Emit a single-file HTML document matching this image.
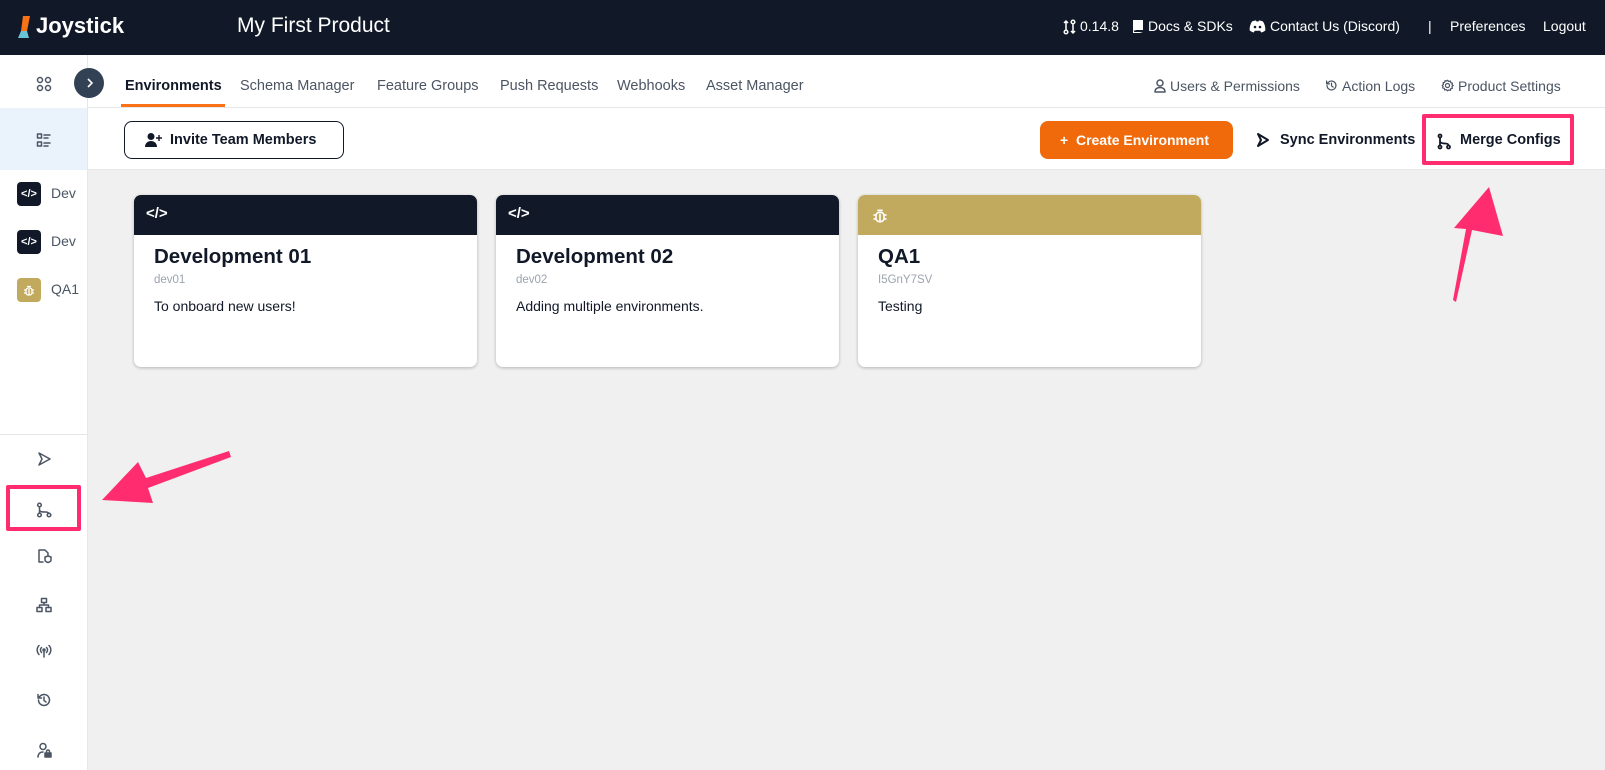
<!DOCTYPE html>
<html><head><meta charset="utf-8"><style>
*{box-sizing:border-box;margin:0;padding:0}
body{width:1605px;height:770px;overflow:hidden;background:#f0f0f0;font-family:"Liberation Sans",sans-serif;position:relative;color:#111827}
.a{position:absolute;white-space:nowrap}
.hdr{left:0;top:0;width:1605px;height:55px;background:#111827;color:#fff}
.tabs{left:88px;top:55px;width:1517px;height:53px;background:#fff;border-bottom:1px solid #e5e7eb}
.bar{left:88px;top:108px;width:1517px;height:62px;background:#fff;border-bottom:1px solid #e5e7eb}
.side{left:0;top:55px;width:88px;height:715px;background:#fff;border-right:1px solid #e5e7eb}
.tab{top:78px;font-size:14.5px;color:#4b5563}
.card{width:343px;height:172px;background:#fff;border-radius:7px;box-shadow:0 1px 3px rgba(0,0,0,.25);overflow:hidden;top:195px}
.card .h{height:40px;background:#111827;position:relative}
.card .t{position:absolute;left:20px;top:50px;font-size:20.5px;font-weight:bold;color:#111827}
.card .s{position:absolute;left:20px;top:79px;font-size:11.5px;color:#9ca3af}
.card .d{position:absolute;left:20px;top:103px;font-size:14px;color:#111827}
svg{display:block}
.ic{stroke:#4b5563;fill:none;stroke-width:1.5;stroke-linecap:round;stroke-linejoin:round}
.hx{top:18px;font-size:14px}
</style></head><body>
<div class="a hdr">
  <svg class="a" style="left:18px;top:15px" width="14" height="24" viewBox="0 0 14 24"><path d="M5 1h7l-3 15H3z" fill="#f97316"/><path d="M3 16h6l2 7H0z" fill="#67c5d6"/></svg>
  <div class="a" style="left:36px;top:13px;font-size:22px;font-weight:bold">Joystick</div>
  <div class="a" style="left:237px;top:14px;font-size:21px">My First Product</div>
  <svg class="a" style="left:1063px;top:19px" width="13" height="16" viewBox="0 0 13 16"><g fill="none" stroke="#fff" stroke-width="1.5"><circle cx="3" cy="13" r="1.8"/><circle cx="10" cy="3" r="1.8"/><path d="M3 11V2M1 4l2-2 2 2M10 5v9M8 12l2 2 2-2"/></g></svg>
  <div class="a hx" style="left:1080px">0.14.8</div>
  <svg class="a" style="left:1132px;top:19px" width="12" height="15" viewBox="0 0 12 15"><path d="M1 1h10v10H1zM1 11v3h10" fill="#fff"/><path d="M2 12.5h9" stroke="#111827"/></svg>
  <div class="a hx" style="left:1148px">Docs &amp; SDKs</div>
  <svg class="a" style="left:1249px;top:20px" width="17" height="13" viewBox="0 0 17 13"><path d="M3 1.5C5 .7 6 .5 7 .5l.5 1h2l.5-1c1 0 2 .2 4 1 1.5 2.5 2.5 5 2.3 9-1.5 1.2-3 1.8-4 2l-1-1.5-.1-.3H5.8l-.1.3-1 1.5c-1-.2-2.5-.8-4-2C.5 6.5 1.5 4 3 1.5z" fill="#fff"/><circle cx="6" cy="7" r="1.3" fill="#111827"/><circle cx="11" cy="7" r="1.3" fill="#111827"/></svg>
  <div class="a hx" style="left:1270px">Contact Us (Discord)</div>
  <div class="a hx" style="left:1428px">|</div>
  <div class="a hx" style="left:1450px">Preferences</div>
  <div class="a hx" style="left:1543px">Logout</div>
</div>
<div class="a side"></div>
<div class="a tabs"></div>
<div class="a bar"></div>
<svg class="a" style="left:36px;top:76px" width="16" height="16" viewBox="0 0 16 16"><g class="ic" stroke-width="1.3"><circle cx="4" cy="4" r="2.5"/><circle cx="12" cy="4" r="2.5"/><circle cx="4" cy="12" r="2.5"/><circle cx="12" cy="12" r="2.5"/></g></svg>
<div class="a" style="left:74px;top:68px;width:30px;height:30px;border-radius:50%;background:#334155"></div>
<svg class="a" style="left:84px;top:77px" width="12" height="12" viewBox="0 0 12 12"><path d="M4 2l4 4-4 4" stroke="#fff" stroke-width="1.6" fill="none"/></svg>
<div class="a" style="left:0;top:108px;width:87px;height:62px;background:#eaf2fc"></div>
<svg class="a" style="left:36px;top:132px" width="16" height="16" viewBox="0 0 16 16"><g class="ic" stroke-width="1.3"><rect x="1.5" y="2" width="4" height="4"/><rect x="1.5" y="10" width="4" height="4"/><path d="M8 3h6M8 6h4M8 11h6M8 14h4"/></g></svg>
<div class="a" style="left:17px;top:182px;width:24px;height:24px;border-radius:4px;background:#111827;color:#fff;font-size:11px;text-align:center;line-height:24px;font-weight:bold">&lt;/&gt;</div>
<div class="a" style="left:51px;top:185px;font-size:14px;color:#4b5563">Dev</div>
<div class="a" style="left:17px;top:230px;width:24px;height:24px;border-radius:4px;background:#111827;color:#fff;font-size:11px;text-align:center;line-height:24px;font-weight:bold">&lt;/&gt;</div>
<div class="a" style="left:51px;top:233px;font-size:14px;color:#4b5563">Dev</div>
<div class="a" style="left:17px;top:278px;width:24px;height:24px;border-radius:4px;background:#c1a95e"></div>
<svg class="a" style="left:23px;top:284px" width="12" height="12" viewBox="0 0 12 12"><g stroke="#fff" fill="none" stroke-width="1.3"><rect x="3" y="4" width="6" height="7" rx="2.5"/><path d="M4 2.5h4M1 6h2M9 6h2M1 9h2M9 9h2M6 5v6"/></g></svg>
<div class="a" style="left:51px;top:281px;font-size:14px;color:#4b5563">QA1</div>
<div class="a" style="left:0;top:434px;width:87px;border-top:1px solid #e5e7eb"></div>
<svg class="a" style="left:36px;top:451px" width="16" height="16" viewBox="0 0 16 16"><path class="ic" d="M3 2l11 6-11 6 3-6z"/></svg>
<div class="a" style="left:6px;top:485px;width:75px;height:46px;border:4px solid #ff2d6f;border-radius:2px"></div>
<svg class="a" style="left:36px;top:502px" width="16" height="16" viewBox="0 0 16 16"><g class="ic" stroke-width="1.3"><circle cx="3.5" cy="3" r="1.8"/><circle cx="3.5" cy="13" r="1.8"/><circle cx="13" cy="13" r="1.8"/><path d="M3.5 5v6M3.5 8c0 2 3 2 6 2 2 0 3.5 1 3.5 1.5"/></g></svg>
<svg class="a" style="left:36px;top:548px" width="16" height="16" viewBox="0 0 16 16"><g class="ic" stroke-width="1.3"><path d="M7 14H3V2h6l3 3v2"/><path d="M9 9l3-1 3 1v3c0 1.5-3 2.5-3 2.5s-3-1-3-2.5z"/></g></svg>
<svg class="a" style="left:36px;top:597px" width="16" height="16" viewBox="0 0 16 16"><g class="ic" stroke-width="1.3"><rect x="5.5" y="1.5" width="5" height="4"/><rect x="1" y="10.5" width="5" height="4"/><rect x="10" y="10.5" width="5" height="4"/><path d="M8 5.5v2.5M3.5 10.5V8h9v2.5"/></g></svg>
<svg class="a" style="left:36px;top:643px" width="16" height="16" viewBox="0 0 16 16"><g class="ic" stroke-width="1.3"><circle cx="8" cy="7" r="1"/><path d="M8 8v6M5.5 4.5a3.5 3.5 0 0 0 0 5M10.5 4.5a3.5 3.5 0 0 1 0 5M3 2.5a6.5 6.5 0 0 0 0 9M13 2.5a6.5 6.5 0 0 1 0 9"/></g></svg>
<svg class="a" style="left:36px;top:692px" width="16" height="16" viewBox="0 0 16 16"><g class="ic" stroke-width="1.5"><path d="M2.5 8a5.5 5.5 0 1 0 1.6-3.9L2 6M2 2.5V6h3.5M8 5v3.5l2 1.5"/></g></svg>
<svg class="a" style="left:36px;top:742px" width="16" height="16" viewBox="0 0 16 16"><g class="ic" stroke-width="1.3"><circle cx="7" cy="4.5" r="3"/><path d="M2 15c0-3 2-5 5-5"/><rect x="9" y="11" width="6" height="4" fill="#4b5563"/><path d="M10.5 11V9.5a1.5 1.5 0 0 1 3 0V11"/></g></svg>
<div class="a tab" style="left:125px;color:#111827;font-weight:bold">Environments</div>
<div class="a" style="left:121px;top:104px;width:104px;height:3px;background:#f97316"></div>
<div class="a tab" style="left:240px">Schema Manager</div>
<div class="a tab" style="left:377px">Feature Groups</div>
<div class="a tab" style="left:500px">Push Requests</div>
<div class="a tab" style="left:617px">Webhooks</div>
<div class="a tab" style="left:706px">Asset Manager</div>
<svg class="a" style="left:1154px;top:79px" width="12" height="14" viewBox="0 0 12 14"><g class="ic" stroke-width="1.2"><circle cx="6" cy="4" r="3"/><path d="M1 13c0-3 2-4.5 5-4.5s5 1.5 5 4.5z"/></g></svg>
<div class="a tab" style="left:1170px;font-size:14px">Users &amp; Permissions</div>
<svg class="a" style="left:1325px;top:79px" width="13" height="13" viewBox="0 0 16 16"><g class="ic" stroke-width="1.6"><path d="M2.5 8a5.5 5.5 0 1 0 1.6-3.9L2 6M2 2.5V6h3.5M8 5v3.5l2 1.5"/></g></svg>
<div class="a tab" style="left:1342px;font-size:14px">Action Logs</div>
<svg class="a" style="left:1441px;top:79px" width="13" height="13" viewBox="0 0 16 16"><g class="ic" stroke-width="1.6"><circle cx="8" cy="8" r="2.5"/><path d="M8 1.5l1.5 1.5 2-.5.5 2 2 .5-.5 2 1.5 1-1.5 1.5.5 2-2 .5-.5 2-2-.5L8 14.5 6.5 13l-2 .5-.5-2-2-.5.5-2L1.5 8 3 6.5l-.5-2 2-.5.5-2 2 .5z"/></g></svg>
<div class="a tab" style="left:1458px;font-size:14px">Product Settings</div>
<div class="a" style="left:124px;top:121px;width:220px;height:38px;border:1px solid #111827;border-radius:8px;background:#fff"></div>
<svg class="a" style="left:145px;top:132px" width="18" height="16" viewBox="0 0 18 16"><circle cx="6" cy="4.5" r="3.5" fill="#111827"/><path d="M0 15c0-4 3-6 6-6s6 2 6 6z" fill="#111827"/><path d="M14 3v6M11 6h6" stroke="#111827" stroke-width="1.4"/></svg>
<div class="a" style="left:170px;top:132px;font-size:14.5px;font-weight:bold">Invite Team Members</div>
<div class="a" style="left:1040px;top:121px;width:193px;height:38px;border-radius:8px;background:#f06a0b;color:#fff;font-size:14px;font-weight:bold;padding:11px 0 0 20px">+&nbsp; Create Environment</div>
<svg class="a" style="left:1256px;top:132px" width="14" height="16" viewBox="0 0 14 16"><path d="M2 2l10 6-10 6 3-6z" fill="none" stroke="#111827" stroke-width="2" stroke-linejoin="round"/></svg>
<div class="a" style="left:1280px;top:132px;font-size:14.5px;font-weight:bold">Sync Environments</div>
<div class="a" style="left:1422px;top:114px;width:152px;height:51px;border:4px solid #ff2d6f;border-radius:2px;background:#fff"></div>
<svg class="a" style="left:1437px;top:132px" width="14" height="18" viewBox="0 0 14 18"><g fill="none" stroke="#111827" stroke-width="1.8"><circle cx="3" cy="4" r="1.5"/><circle cx="3" cy="15" r="1.5"/><circle cx="11.5" cy="15" r="1.5"/><path d="M3 5.5v8M3 9c0 2 3 2.5 5.5 2.5 2 0 3 1 3 2"/></g></svg>
<div class="a" style="left:1460px;top:132px;font-size:14.5px;font-weight:bold">Merge Configs</div>
<div class="a card" style="left:134px"><div class="h"><div class="a" style="left:12px;top:10px;color:#fff;font-size:15px;font-weight:bold">&lt;/&gt;</div></div>
<div class="t">Development 01</div><div class="s">dev01</div><div class="d">To onboard new users!</div></div>
<div class="a card" style="left:496px"><div class="h"><div class="a" style="left:12px;top:10px;color:#fff;font-size:15px;font-weight:bold">&lt;/&gt;</div></div>
<div class="t">Development 02</div><div class="s">dev02</div><div class="d">Adding multiple environments.</div></div>
<div class="a card" style="left:858px"><div class="h" style="background:#c1a95e"><svg class="a" style="left:14px;top:12px" width="16" height="16" viewBox="0 0 12 12"><g stroke="#fff" fill="none" stroke-width="1.2"><rect x="3" y="4" width="6" height="7" rx="2.5"/><path d="M4 2.5h4M1 6h2M9 6h2M1 9h2M9 9h2M6 5v6"/></g></svg></div>
<div class="t">QA1</div><div class="s">I5GnY7SV</div><div class="d">Testing</div></div>
<svg class="a" style="left:0;top:0" width="1605" height="770" viewBox="0 0 1605 770">
<path d="M229 451 L146 478 L138 462 L102 500 L153 503 L148 488 L231 457 Z" fill="#ff2d6f"/>
<path d="M1456 302 L1472 230 L1503 236 L1489 187 L1454 228 L1466 229 L1453 300 Z" fill="#ff2d6f"/>
</svg>
</body></html>
